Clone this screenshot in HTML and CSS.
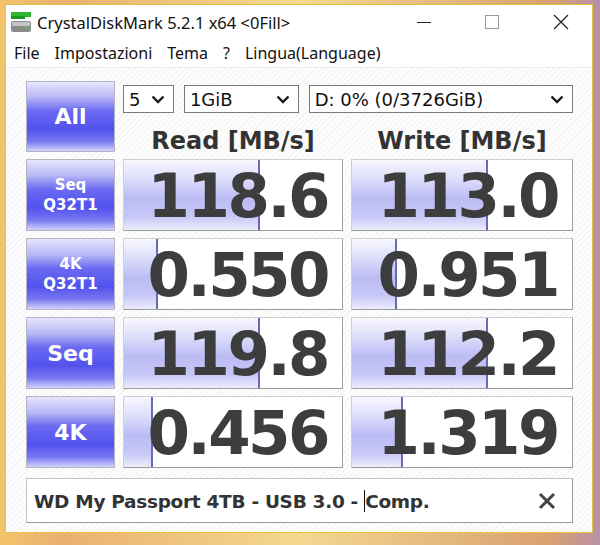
FILE: index.html
```html
<!DOCTYPE html>
<html lang="it">
<head>
    <meta charset="UTF-8">
    <title>CrystalDiskMark 5.2.1 x64 &lt;0Fill&gt;</title>
    <link rel="stylesheet" href="styles.css">
</head>
<body>
    <div class="window">
        <div class="titlebar">
            <svg class="app-icon" width="22" height="22" viewBox="0 0 22 22">
                <rect x="1" y="1" width="20" height="5" fill="#2fb52f"/>
                <rect x="1" y="5" width="14" height="3" fill="#1f9a1f"/>
                <rect x="1" y="10" width="20" height="11" rx="2" fill="#8c8c8c"/>
                <rect x="2" y="11" width="18" height="4" rx="1" fill="#c4c4c4"/>
                <rect x="15" y="16" width="3" height="2" fill="#3fd03f"/>
            </svg>
            <span class="title">CrystalDiskMark 5.2.1 x64 &lt;0Fill&gt;</span>
            <div class="caption-btns">
                <span class="cap cap-min"></span>
                <span class="cap cap-max"></span>
                <svg class="cap cap-close" width="16" height="16" viewBox="0 0 16 16">
                    <path d="M1 1 L15 15 M15 1 L1 15" stroke="#222" stroke-width="1.2"/>
                </svg>
            </div>
        </div>
        <div class="menubar">
            <span>File</span>
            <span>Impostazioni</span>
            <span>Tema</span>
            <span>?</span>
            <span>Lingua(Language)</span>
        </div>

        <div class="client">
            <div class="grid">
                <div class="btn btn-all">All</div>
                <div class="top-right">
                    <div class="selects">
                        <div class="select sel-count">5 <svg width="14" height="9" viewBox="0 0 14 9"><path d="M1.5 1.5 L7 7 L12.5 1.5" fill="none" stroke="#1a1a1a" stroke-width="2.4"/></svg></div>
                        <div class="select sel-size">1GiB <svg width="14" height="9" viewBox="0 0 14 9"><path d="M1.5 1.5 L7 7 L12.5 1.5" fill="none" stroke="#1a1a1a" stroke-width="2.4"/></svg></div>
                        <div class="select sel-drive">D: 0% (0/3726GiB) <svg width="14" height="9" viewBox="0 0 14 9"><path d="M1.5 1.5 L7 7 L12.5 1.5" fill="none" stroke="#1a1a1a" stroke-width="2.4"/></svg></div>
                    </div>
                    <div class="headers">
                        <div class="head">Read [MB/s]</div>
                        <div class="head">Write [MB/s]</div>
                    </div>
                </div>

                <!-- Seq Q32T1 -->
                <div class="btn btn-small">Seq<br>Q32T1</div>
                <div class="cell"><div class="bar" style="width: 134px"></div><span class="val">118.6</span></div>
                <div class="cell"><div class="bar" style="width: 134px"></div><span class="val">113.0</span></div>

                <!-- 4K Q32T1 -->
                <div class="btn btn-small">4K<br>Q32T1</div>
                <div class="cell"><div class="bar" style="width: 32px"></div><span class="val">0.550</span></div>
                <div class="cell"><div class="bar" style="width: 43px"></div><span class="val">0.951</span></div>

                <!-- Seq -->
                <div class="btn">Seq</div>
                <div class="cell"><div class="bar" style="width: 134px"></div><span class="val">119.8</span></div>
                <div class="cell"><div class="bar" style="width: 134px"></div><span class="val">112.2</span></div>

                <!-- 4K -->
                <div class="btn">4K</div>
                <div class="cell"><div class="bar" style="width: 27px"></div><span class="val">0.456</span></div>
                <div class="cell"><div class="bar" style="width: 49px"></div><span class="val">1.319</span></div>
            </div>

            <div class="comment">
                <span class="comment-text">WD My Passport 4TB - USB 3.0 - <span class="caret"></span>Comp.</span>
                <svg class="clear" width="18" height="18" viewBox="0 0 18 18">
                    <path d="M2 2 L16 16 M16 2 L2 16" stroke="#444" stroke-width="3"/>
                </svg>
            </div>
        </div>
    </div>
</body>
</html>
```

FILE: styles.css
```css
html, body {
    margin: 0;
    height: 100%;
}
body {
    background: linear-gradient(90deg, #f2c46a 0%, #e9b070 10%, #f4d890 50%, #d8a070 92%, #b890a8 100%);
    font-family: "Noto Sans", sans-serif;
    color: #222;
    overflow: hidden;
}
.window {
    margin: 4px 0 0 5px;
    width: 586px;
    height: 527px;
    background: #fff;
    border: 1px solid #e4c44a;
    display: flex;
    flex-direction: column;
}
.titlebar {
    height: 34px;
    display: flex;
    align-items: center;
    padding-left: 4px;
}
.app-icon {
    margin-right: 5px;
}
.title {
    font-size: 16.5px;
    color: #111;
}
.caption-btns {
    margin-left: auto;
    display: flex;
    align-items: center;
}
.cap {
    display: block;
}
.cap-min {
    width: 14px;
    height: 1px;
    background: #222;
    margin-right: 54px;
}
.cap-max {
    width: 12px;
    height: 12px;
    border: 1px solid #999;
    margin-right: 54px;
}
.cap-close {
    margin-right: 23px;
}
.menubar {
    height: 28px;
    display: flex;
    align-items: center;
    gap: 15px;
    padding-left: 8px;
    font-size: 16px;
    color: #111;
    border-bottom: 1px solid #ececec;
}
.client {
    flex: 1;
    padding: 13px 0 0 20px;
    background: repeating-linear-gradient(135deg, #fdfdfd 0px, #fdfdfd 3px, #f3f3f3 3px, #f3f3f3 4px);
}
.grid {
    display: grid;
    grid-template-columns: 89px 220px 222px;
    grid-template-rows: 71px repeat(4, 72px);
    column-gap: 8px;
    row-gap: 7px;
}
.btn {
    box-sizing: border-box;
    border: 1px solid #b4b4c4;
    background: linear-gradient(180deg, #e6e6fd 0%, #b8b8f6 22%, #6a6af2 42%, #5252ee 68%, #7878f2 86%, #d2d2fc 100%);
    color: #fff;
    font-family: "DejaVu Sans", sans-serif;
    font-weight: bold;
    font-size: 22px;
    display: flex;
    align-items: center;
    justify-content: center;
    text-align: center;
}
.btn-small {
    font-size: 15px;
    line-height: 20px;
}
.top-right {
    grid-column: 2 / 4;
    display: flex;
    flex-direction: column;
}
.selects {
    display: flex;
    gap: 10px;
    margin-top: 4px;
}
.select {
    box-sizing: border-box;
    height: 28px;
    border: 1px solid #7a7a7a;
    background: #fff;
    font-family: "DejaVu Sans", sans-serif;
    font-size: 18px;
    color: #111;
    display: flex;
    align-items: center;
    justify-content: space-between;
    padding: 0 8px 0 5px;
}
.sel-count { width: 51px; }
.sel-size { width: 115px; }
.sel-drive { width: 265px; }
.headers {
    display: flex;
    gap: 8px;
    margin-top: 14px;
}
.head {
    width: 220px;
    text-align: center;
    font-family: "DejaVu Sans", sans-serif;
    font-weight: bold;
    font-size: 24px;
    line-height: 28px;
    color: #333;
}
.head + .head {
    width: 222px;
}
.cell {
    position: relative;
    box-sizing: border-box;
    background: #fff;
    border: 1px solid #cfcfcf;
    border-right-color: #a0a0a0;
    border-bottom-color: #9a9a9a;
    display: flex;
    align-items: center;
    justify-content: flex-end;
    padding-right: 14px;
    overflow: hidden;
}
.bar {
    position: absolute;
    left: 0;
    top: 0;
    bottom: 0;
    border-right: 2px solid #6a6ab4;
    background: linear-gradient(180deg, #f8f8ff 0%, #dcdcfb 28%, #bcbcf5 55%, #c6c6f7 80%, #ececfd 100%);
}
.val {
    position: relative;
    font-family: "DejaVu Sans", sans-serif;
    font-weight: bold;
    font-size: 61px;
    letter-spacing: -2.5px;
    color: #3d3d3d;
    line-height: 1;
}
.comment {
    box-sizing: border-box;
    width: 547px;
    height: 45px;
    margin-top: 10px;
    background: #fff;
    border: 1px solid #c4c4c4;
    border-right-color: #9a9a9a;
    border-bottom-color: #9a9a9a;
    display: flex;
    align-items: center;
    padding: 0 16px 0 7px;
}
.comment-text {
    font-family: "DejaVu Sans", sans-serif;
    font-weight: bold;
    font-size: 18.5px;
    letter-spacing: -0.3px;
    color: #333;
}
.caret {
    display: inline-block;
    width: 1px;
    height: 22px;
    background: #111;
    vertical-align: -4px;
}
.clear {
    margin-left: auto;
}
```
